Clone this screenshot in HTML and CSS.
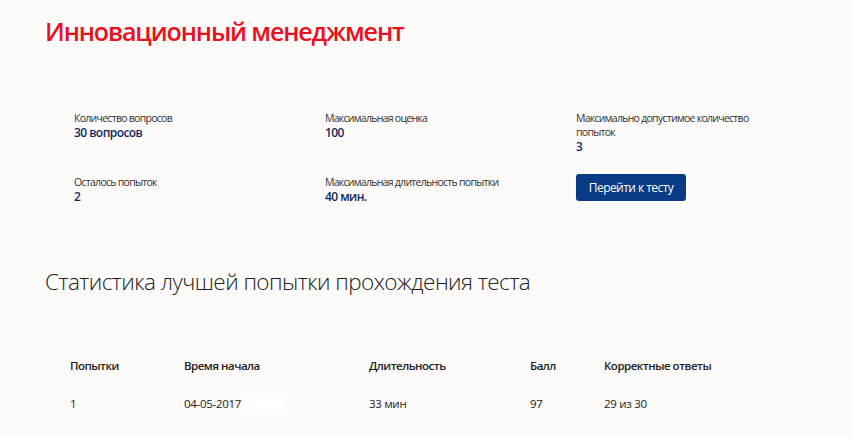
FILE: index.html
```html
<!DOCTYPE html>
<html lang="ru">
<head>
<meta charset="utf-8">
<title>Инновационный менеджмент</title>
<link rel="stylesheet" href="styles.css">
</head>
<body>
<main class="page">
  <h1 class="title">Инновационный менеджмент</h1>

  <section class="info">
    <div class="info-item">
      <div class="info-label">Количество вопросов</div>
      <div class="info-value">30 вопросов</div>
    </div>
    <div class="info-item">
      <div class="info-label">Максимальная оценка</div>
      <div class="info-value">100</div>
    </div>
    <div class="info-item info-wide">
      <div class="info-label">Максимально допустимое количество попыток</div>
      <div class="info-value">3</div>
    </div>
    <div class="info-item">
      <div class="info-label">Осталось попыток</div>
      <div class="info-value">2</div>
    </div>
    <div class="info-item">
      <div class="info-label">Максимальная длительность попытки</div>
      <div class="info-value">40 мин.</div>
    </div>
    <div class="info-item">
      <button class="btn" type="button">Перейти к тесту</button>
    </div>
  </section>

  <h2 class="subtitle">Статистика лучшей попытки прохождения теста</h2>

  <table class="stats">
    <thead>
      <tr>
        <th class="c1">Попытки</th>
        <th class="c2">Время начала</th>
        <th class="c3">Длительность</th>
        <th class="c4">Балл</th>
        <th class="c5">Корректные ответы</th>
      </tr>
    </thead>
    <tbody>
      <tr>
        <td>1</td>
        <td>04-05-2017<span class="mask"></span></td>
        <td>33 мин</td>
        <td>97</td>
        <td>29 из 30</td>
      </tr>
    </tbody>
  </table>
</main>
</body>
</html>
```
FILE: styles.css
```css
html, body {
  margin: 0;
  padding: 0;
  background: #fcfbfa;
}
body {
  font-family: "Open Sans", "Noto Sans", "DejaVu Sans", sans-serif;
  color: #262626;
}
.page {
  padding: 14px 0 0 45px;
}
.title {
  margin: 0;
  font-size: 25px;
  line-height: 34px;
  font-weight: 600;
  color: #ea1020;
  letter-spacing: -1.1px;
}
.info {
  display: grid;
  grid-template-columns: 251px 251px 200px;
  row-gap: 20px;
  margin: 63px 0 0 29px;
}
.info-label {
  font-size: 10.5px;
  line-height: 14px;
  color: #333;
  letter-spacing: -0.72px;
}
.info-value {
  font-size: 12px;
  line-height: 16px;
  font-weight: 600;
  color: #12295e;
  letter-spacing: -0.55px;
}
.btn {
  display: inline-block;
  width: 110px;
  height: 27px;
  margin-top: -2px;
  border: 0;
  border-radius: 3px;
  background: #093b86;
  color: #fff;
  font-family: inherit;
  font-size: 12px;
  letter-spacing: -0.55px;
  padding: 0;
  cursor: pointer;
}
.subtitle {
  margin: 62px 0 0;
  font-size: 22.5px;
  line-height: 30px;
  font-weight: 300;
  color: #222;
  letter-spacing: -0.55px;
}
.stats {
  margin: 61px 0 0 25px;
  border-collapse: collapse;
  font-size: 11.5px;
  color: #222;
}
.stats th, .stats td {
  padding: 0;
  text-align: left;
  vertical-align: top;
}
.stats th {
  font-weight: 600;
  line-height: 16px;
  padding-bottom: 22px;
  letter-spacing: -0.5px;
}
.stats td {
  line-height: 16px;
  letter-spacing: -0.3px;
}
.c1 { width: 114px; }
.c2 { width: 185px; }
.c3 { width: 161px; }
.c4 { width: 74px; }
.c5 { width: 150px; }
.mask {
  display: inline-block;
  width: 40px;
  height: 11px;
  margin-left: 2px;
  vertical-align: -2px;
  background: #ffffff;
  border-radius: 3px;
}
```
